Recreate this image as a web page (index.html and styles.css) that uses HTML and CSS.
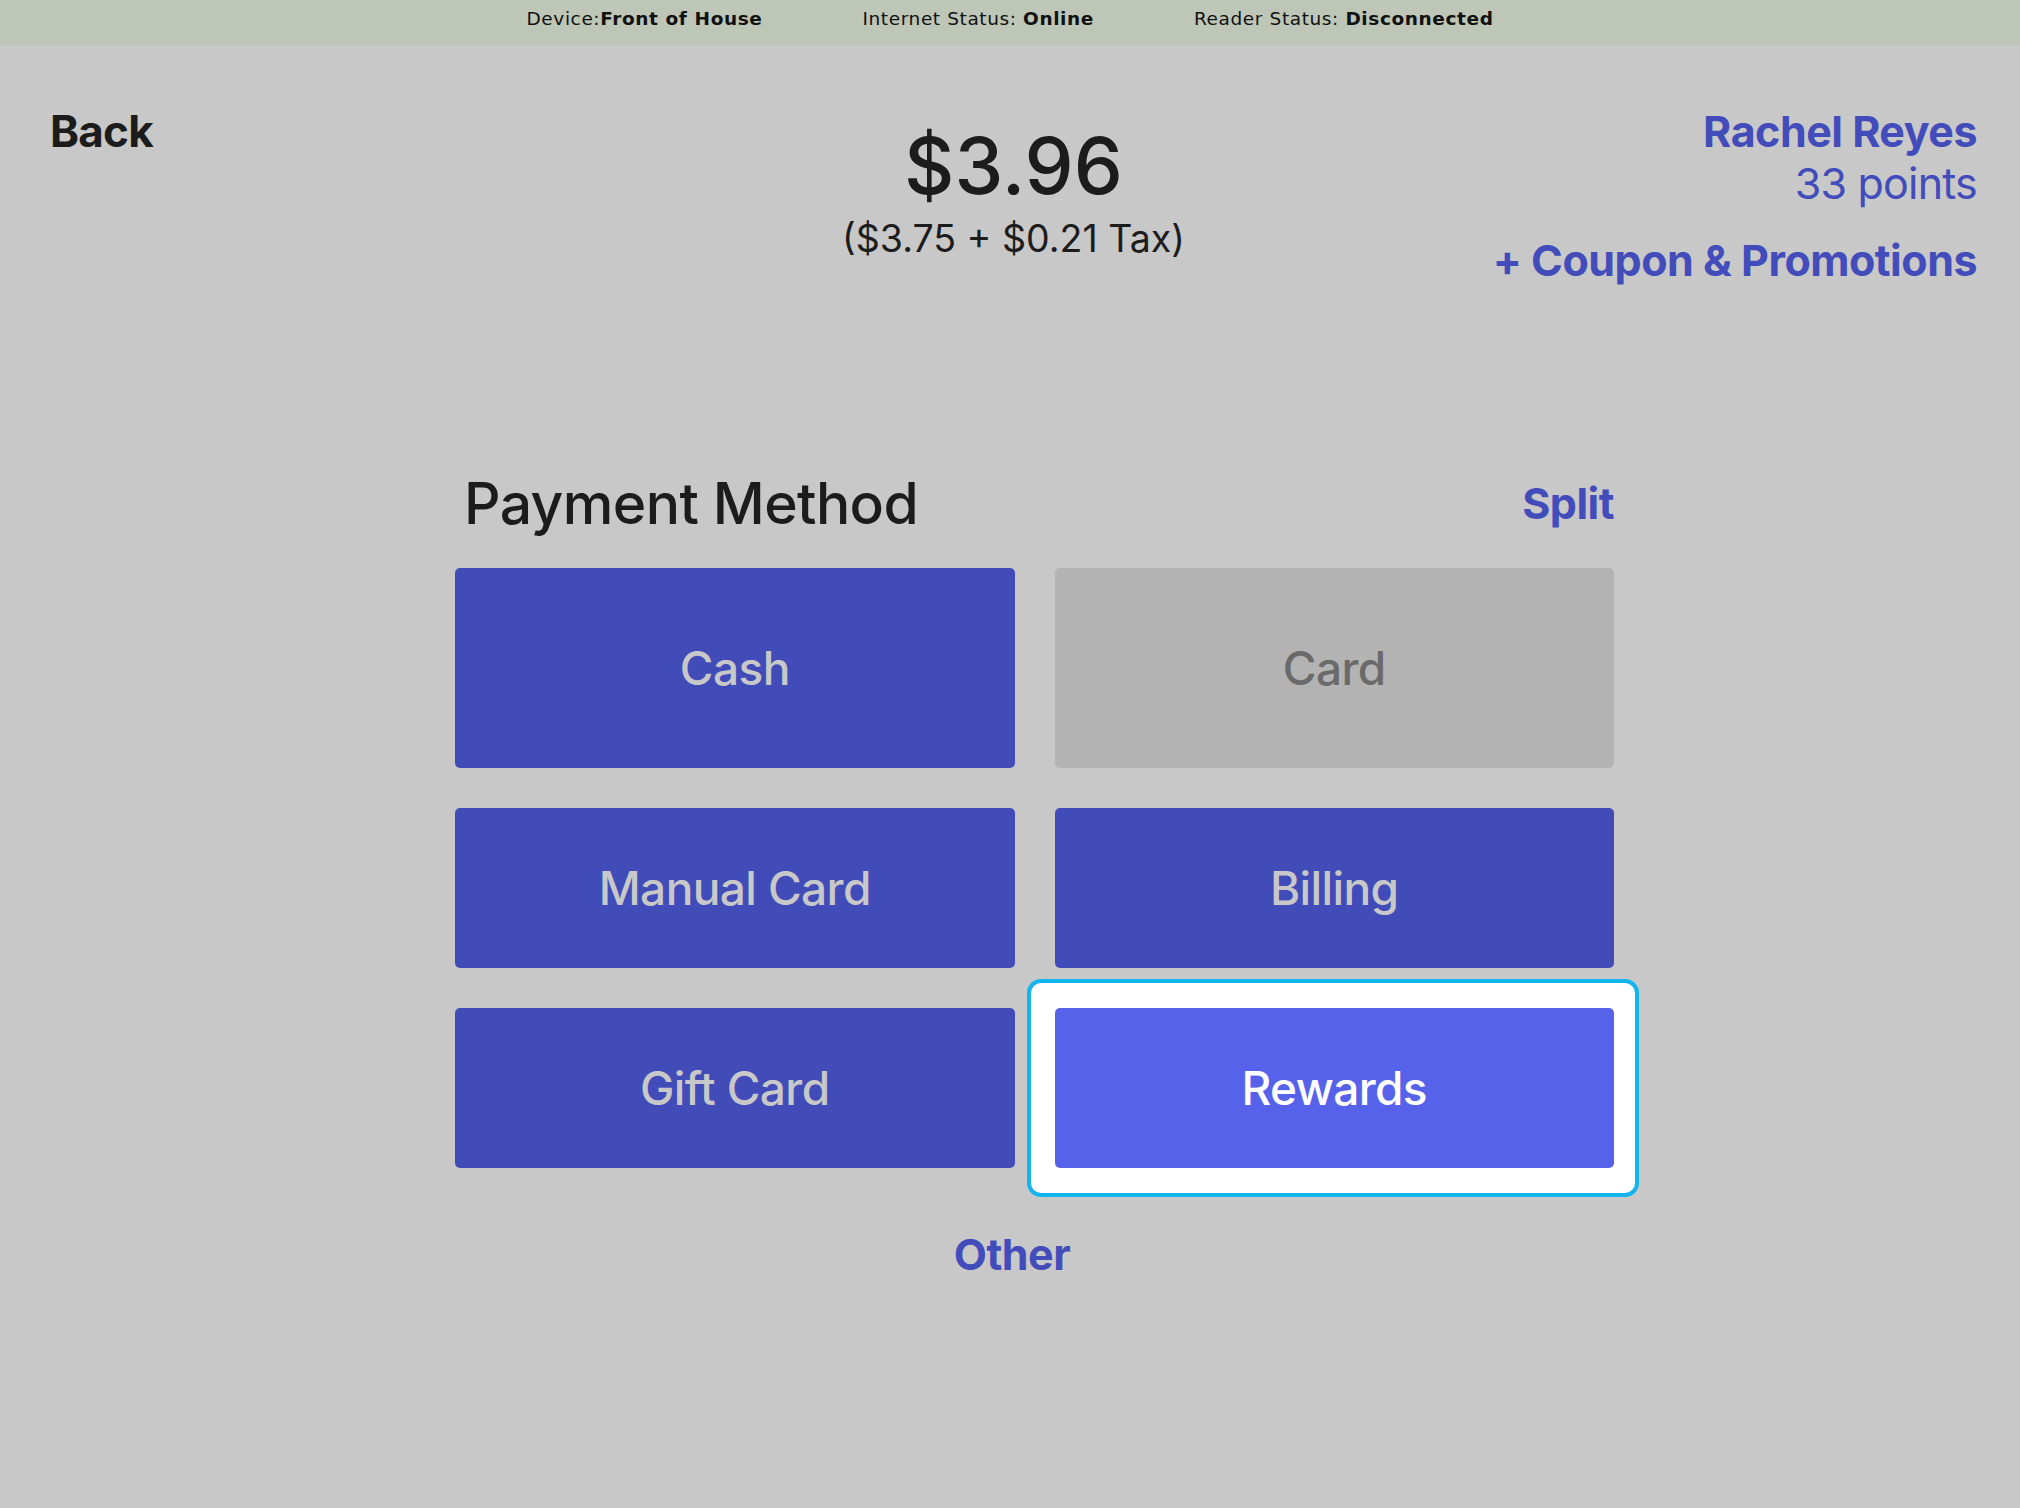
FILE: index.html
```html
<!DOCTYPE html>
<html lang="en">
<head>
    <meta charset="UTF-8">
    <meta name="viewport" content="width=device-width, initial-scale=1.0">
    <title>Payment</title>
    <link rel="stylesheet" href="styles.css">
</head>
<body>
    <div class="status-bar">
        <span>Device:<b>Front of House</b></span>
        <span>Internet Status: <b>Online</b></span>
        <span>Reader Status: <b>Disconnected</b></span>
    </div>

    <div class="header">
        <a href="#" class="back">Back</a>
        <div class="total">
            <div class="amount">$3.96</div>
            <div class="breakdown">($3.75 + $0.21 Tax)</div>
        </div>
        <div class="customer">
            <a href="#" class="customer-name">Rachel Reyes</a>
            <div class="points">33 points</div>
            <a href="#" class="coupon">+ Coupon &amp; Promotions</a>
        </div>
    </div>

    <div class="payment">
        <div class="payment-title">
            <h2>Payment Method</h2>
            <a href="#" class="split">Split</a>
        </div>
        <div class="methods">
            <button class="method">Cash</button>
            <button class="method disabled">Card</button>
            <button class="method">Manual Card</button>
            <button class="method">Billing</button>
            <button class="method">Gift Card</button>
            <button class="method selected">Rewards</button>
        </div>
    </div>

    <div class="other-row">
        <a href="#" class="other">Other</a>
    </div>
</body>
</html>
```

FILE: styles.css
```css
body {
    margin: 0;
    font-family: Inter, "Noto Sans", sans-serif;
    background-color: #c8c8c8;
    color: #1c1c1c;
}
a {
    text-decoration: none;
}

.status-bar {
    height: 45px;
    box-sizing: border-box;
    padding-top: 8px;
    display: flex;
    justify-content: center;
    gap: 100px;
    background-color: #bec6b7;
    font-family: "DejaVu Sans", sans-serif;
    font-size: 18.5px;
    line-height: 22px;
    letter-spacing: 0.6px;
    color: #111;
}

.header {
    display: grid;
    grid-template-columns: 1fr auto 1fr;
    padding: 60px 43px 0 50px;
}
.back {
    justify-self: start;
    font-size: 44px;
    font-weight: 700;
    line-height: 1.2;
    color: #1c1c1c;
    letter-spacing: -0.8px;
}
.total {
    text-align: center;
}
.amount {
    margin-top: 22px;
    font-size: 78px;
    font-weight: 500;
    line-height: 1;
}
.breakdown {
    margin-top: 11px;
    font-size: 37.5px;
    line-height: 1.2;
}
.customer {
    display: flex;
    flex-direction: column;
    align-items: flex-end;
    font-size: 43px;
    line-height: 52px;
    color: #434cbb;
}
.points {
    letter-spacing: -0.8px;
}
.customer-name, .coupon {
    font-weight: 700;
    color: #434cbb;
    letter-spacing: -0.5px;
}
.coupon {
    margin-top: 25px;
}

.payment {
    width: 1159px;
    margin: 184px 0 0 455px;
}
.payment-title {
    display: flex;
    justify-content: space-between;
    align-items: center;
    margin-bottom: 30px;
    padding-left: 9px;
}
.payment-title h2 {
    margin: 0;
    font-size: 57px;
    font-weight: 500;
    line-height: 1.2;
    letter-spacing: -0.6px;
}
.split {
    font-size: 43px;
    font-weight: 700;
    line-height: 1.2;
    color: #434cbb;
    letter-spacing: -0.5px;
}

.methods {
    display: grid;
    grid-template-columns: 1fr 1fr;
    grid-template-rows: 200px 160px 160px;
    gap: 40px;
}
.method {
    border: none;
    border-radius: 5px;
    background-color: #424cb9;
    color: #c8c8c8;
    font-family: Inter, "Noto Sans", sans-serif;
    font-size: 46px;
    font-weight: 500;
    letter-spacing: -0.6px;
    cursor: pointer;
}
.method.disabled {
    background-color: #b3b3b3;
    color: #6a6a6a;
}
.method.selected {
    position: relative;
    background-color: #5762eb;
    color: #fff;
}
.method.selected::before {
    content: "";
    position: absolute;
    top: -29px;
    bottom: -29px;
    left: -28px;
    right: -25px;
    z-index: -1;
    background: #fff;
    border: 4px solid #12b5ec;
    border-radius: 14px;
}

.other-row {
    margin-top: 60px;
    padding-left: 4px;
    text-align: center;
    font-size: 43px;
    line-height: 52px;
}
.other {
    font-weight: 700;
    color: #434cbb;
    letter-spacing: -0.5px;
}
```
